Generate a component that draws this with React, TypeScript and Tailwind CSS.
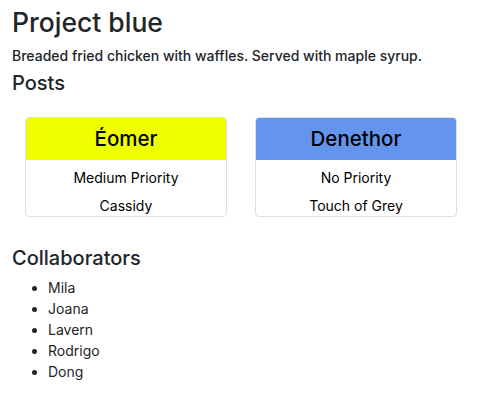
import React from 'react';

const posts = [
  { name: 'Éomer', priority: 'Medium Priority', author: 'Cassidy', color: 'bg-[#f0ff00]' },
  { name: 'Denethor', priority: 'No Priority', author: 'Touch of Grey', color: 'bg-[#6495ed]' },
];

const collaborators = ['Mila', 'Joana', 'Lavern', 'Rodrigo', 'Dong'];

export default function App() {
  return (
    <div className="px-3 pt-[7px] text-[#212529] font-['Inter','Noto_Sans',sans-serif]">
      <h1 className="text-[26.5px] font-medium leading-[1.2]">Project blue</h1>
      <p className="mt-[7px] text-[14px] font-medium leading-[1.4]">
        Breaded fried chicken with waffles. Served with maple syrup.
      </p>
      <h4 className="mt-[6px] text-[20px] font-medium leading-[1.2]">Posts</h4>

      {/* Post cards */}
      <div className="flex gap-[28px] pl-[13px] mt-[22px]">
        {posts.map((post) => (
          <div
            key={post.name}
            className="w-[202px] h-[100px] border border-[#dfdfdf] rounded-[4px] overflow-hidden flex flex-col text-black"
          >
            <div className={`${post.color} h-[43px] flex items-center justify-center text-[20.5px] font-medium`}>
              {post.name}
            </div>
            <div className="flex flex-col items-center text-[14px] pt-[8px] gap-[8px] leading-[20px]">
              <div>{post.priority}</div>
              <div>{post.author}</div>
            </div>
          </div>
        ))}
      </div>

      <h4 className="mt-[29px] text-[20px] font-medium leading-[1.2]">Collaborators</h4>
      <ul className="mt-[7px] list-disc pl-[36px] text-[14px] leading-[21px]">
        {collaborators.map((c) => (
          <li key={c}>{c}</li>
        ))}
      </ul>
    </div>
  );
}
